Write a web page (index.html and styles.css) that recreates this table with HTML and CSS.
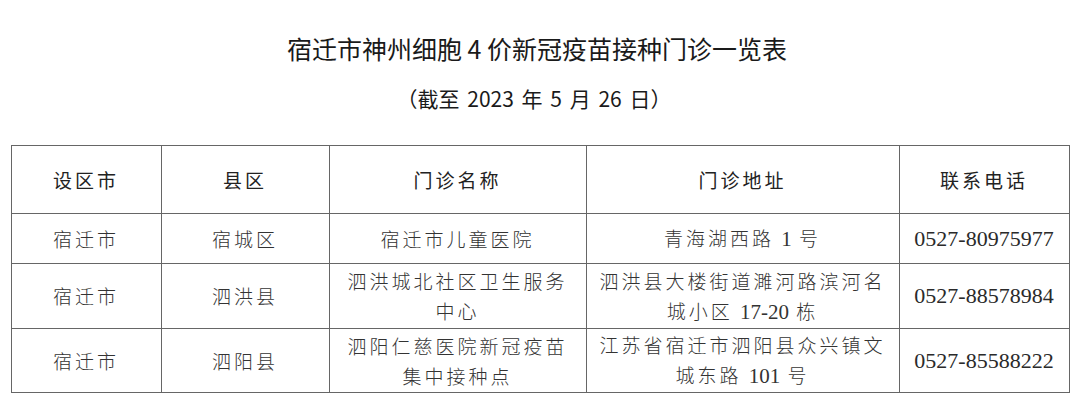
FILE: index.html
```html
<!DOCTYPE html>
<html lang="zh-CN">
<head>
<meta charset="utf-8">
<title>宿迁市神州细胞4价新冠疫苗接种门诊一览表</title>
<link rel="stylesheet" href="styles.css">
</head>
<body>
<div class="page">
  <h1 class="title">宿迁市神州细胞 4 价新冠疫苗接种门诊一览表</h1>
  <p class="subtitle">（截至 2023 年 5 月 26 日）</p>
  <table class="clinics">
    <colgroup>
      <col class="c1"><col class="c2"><col class="c3"><col class="c4"><col class="c5">
    </colgroup>
    <thead>
      <tr class="head">
        <th>设区市</th><th>县区</th><th>门诊名称</th><th>门诊地址</th><th>联系电话</th>
      </tr>
    </thead>
    <tbody>
      <tr class="r1">
        <td>宿迁市</td><td>宿城区</td><td>宿迁市儿童医院</td>
        <td>青海湖西路 <span class="num">1</span> 号</td>
        <td class="phone">0527-80975977</td>
      </tr>
      <tr class="r2">
        <td>宿迁市</td><td>泗洪县</td><td>泗洪城北社区卫生服务<br>中心</td>
        <td>泗洪县大楼街道濉河路滨河名<br>城小区 <span class="num">17-20</span> 栋</td>
        <td class="phone">0527-88578984</td>
      </tr>
      <tr class="r3">
        <td>宿迁市</td><td>泗阳县</td><td>泗阳仁慈医院新冠疫苗<br>集中接种点</td>
        <td>江苏省宿迁市泗阳县众兴镇文<br>城东路 <span class="num">101</span> 号</td>
        <td class="phone">0527-85588222</td>
      </tr>
    </tbody>
  </table>
</div>
</body>
</html>
```

FILE: styles.css
```css
html, body {
  margin: 0;
  padding: 0;
  background: #ffffff;
}

.page {
  width: 1080px;
  padding-top: 30px;
  display: flex;
  flex-direction: column;
  align-items: center;
}

.title {
  margin: 0 0 0 -6px;
  font-family: "Noto Sans CJK SC", "Liberation Sans", sans-serif;
  font-weight: 400;
  font-size: 25px;
  line-height: 36px;
  color: #1a1a1a;
}

.subtitle {
  margin: 17px 0 0 -12px;
  font-family: "Noto Sans CJK SC", "Liberation Sans", sans-serif;
  font-size: 21px;
  word-spacing: 3px;
  line-height: 30px;
  color: #1a1a1a;
}

.clinics {
  margin-top: 32px;
  width: 1058px;
  border-collapse: collapse;
  table-layout: fixed;
  font-family: "Noto Sans CJK SC", sans-serif;
  font-weight: 300;
  font-size: 19px;
  letter-spacing: 3px;
  color: #333333;
}

.c1 { width: 150px; }
.c2 { width: 168px; }
.c3 { width: 257px; }
.c4 { width: 313px; }
.c5 { width: 170px; }

.clinics th,
.clinics td {
  border: 1px solid #666666;
  text-align: center;
  vertical-align: middle;
  padding: 0;
  line-height: 30px;
}

.clinics th {
  font-weight: 400;
  color: #222222;
}

.head { height: 68px; }
.r1 { height: 50px; }
.r2 { height: 65px; }
.r3 { height: 64px; }

.num {
  font-family: "Liberation Serif", serif;
  font-size: 21px;
  letter-spacing: 0;
}

.clinics td.phone {
  font-family: "Liberation Serif", serif;
  font-weight: 400;
  font-size: 22px;
  letter-spacing: 0;
  color: #2a2a2a;
}
```
